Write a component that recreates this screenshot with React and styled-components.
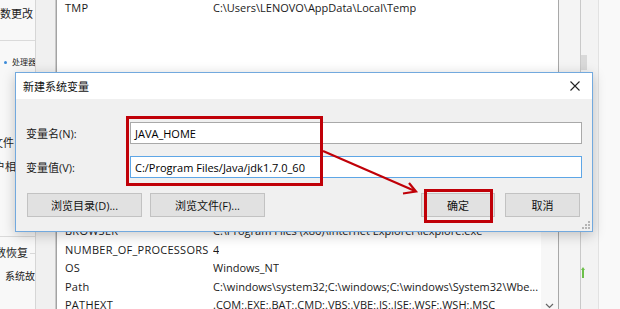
import React from "react";
import styled, { createGlobalStyle } from "styled-components";

const GlobalStyle = createGlobalStyle`
  html, body {
    margin: 0;
    padding: 0;
  }
  body {
    width: 620px;
    height: 309px;
    overflow: hidden;
    background: #f0f0f0;
    font-family: "Open Sans", "Noto Sans CJK SC", sans-serif;
    font-size: 11px;
    color: #1a1a1a;
  }
`;

const Desktop = styled.div`
  position: relative;
  display: flex;
  width: 620px;
  height: 309px;
  overflow: hidden;
`;

/* ---------- background: environment variables window ---------- */

const LeftPane = styled.div`
  width: 35px;
  flex: none;
  display: flex;
  flex-direction: column;
  background: #f8f8f8;
  border-right: 1px solid #d6d6d6;
  overflow: hidden;
  white-space: nowrap;
`;

const PaneText = styled.div`
  display: flex;
  align-items: center;
  gap: ${(p) => p.$gap || 0}px;
  height: 16px;
  line-height: 16px;
  margin-top: ${(p) => p.$top}px;
  margin-left: ${(p) => p.$indent || 0}px;
  font-size: ${(p) => p.$size || 11}px;
  color: #222;
`;

const PaneRule = styled.div`
  height: 1px;
  margin-top: ${(p) => p.$top}px;
  background: #dadada;
`;

const GroupLine = styled.span`
  flex: 1;
  height: 1px;
  background: #d8d8d8;
`;

const LinkDot = styled.span`
  width: 3px;
  height: 3px;
  flex: none;
  border-radius: 50%;
  background: #3b8ad8;
`;

const Gutter = styled.div`
  width: 19px;
  flex: none;
  background: #f0f0f0;
  border-right: 1px solid #cacaca;
`;

const ListBox = styled.div`
  width: 501px;
  flex: none;
  display: flex;
  flex-direction: column;
  background: #fff;
  border-left: 1px solid #a3a3a3;
  border-right: 1px solid #a8a8a8;
`;

const UpperList = styled.div`
  margin-top: -1px;
`;

const LowerList = styled.div`
  margin-top: auto;
  height: 87px;
  display: flex;
`;

const Rows = styled.div`
  flex: 1;
  min-width: 0;
`;

const Row = styled.div`
  display: flex;
  height: 18.5px;
  line-height: 18.5px;
  padding-left: 8px;
  white-space: nowrap;
  overflow: hidden;
`;

const NameCell = styled.span`
  width: 148px;
  flex: none;
  letter-spacing: 0.25px;
`;

const ValueCell = styled.span`
  overflow: hidden;
`;

const ScrollTrack = styled.div`
  width: 17px;
  flex: none;
  display: flex;
  flex-direction: column;
  justify-content: flex-end;
  align-items: center;
  background: #f7f7f7;
`;

const Strip = styled.div`
  width: ${(p) => p.$w}px;
  flex: none;
  display: flex;
  flex-direction: column;
  background: ${(p) => p.$bg};
  border-right: ${(p) => (p.$line ? `1px solid ${p.$line}` : "none")};
`;

const Thumb = styled.div`
  width: 6px;
  height: 15px;
  margin-top: 55px;
  background: #d9d9d9;
`;

const GreenMark = styled.div`
  margin-top: 196px;
  width: 4px;
  height: 11px;
`;

/* ---------- dialog ---------- */

const Dialog = styled.div`
  position: absolute;
  left: 15px;
  top: 72px;
  width: 576px;
  height: 158px;
  display: flex;
  flex-direction: column;
  background: #f0f0f0;
  border: 1px solid #72a9de;
  box-shadow: 0 3px 12px rgba(0, 0, 0, 0.22);
`;

const TitleBar = styled.div`
  display: flex;
  align-items: center;
  height: 26px;
  padding-left: 7px;
  background: #fff;
`;

const Title = styled.div`
  flex: 1;
  font-size: 11px;
  color: #111;
`;

const CloseButton = styled.div`
  width: 34px;
  height: 26px;
  display: flex;
  align-items: center;
  justify-content: center;
`;

const Body = styled.div`
  flex: 1;
  display: flex;
  flex-direction: column;
  padding: 23px 10px 0 10px;
`;

const FieldRow = styled.div`
  display: flex;
  align-items: center;
  height: 22px;
  margin-top: ${(p) => p.$top || 0}px;
`;

const Label = styled.div`
  width: 104px;
  flex: none;
  color: #1a1a1a;
`;

const Input = styled.div`
  flex: 1;
  height: 22px;
  box-sizing: border-box;
  display: flex;
  align-items: center;
  padding-left: 4px;
  background: #fff;
  border: 1px solid ${(p) => (p.$focused ? "#5ea6e6" : "#a9a9a9")};
  font-size: 11px;
  color: #000;
  white-space: nowrap;
`;

const ButtonRow = styled.div`
  display: flex;
  align-items: center;
  margin-top: 15px;
  padding: 0 2px 0 1px;
`;

const ButtonGroup = styled.div`
  display: flex;
  gap: ${(p) => p.$gap}px;
  margin-left: ${(p) => (p.$right ? "auto" : "0")};
`;

const Button = styled.div`
  width: ${(p) => p.$w}px;
  height: 24px;
  box-sizing: border-box;
  display: flex;
  align-items: center;
  justify-content: center;
  background: #e1e1e1;
  border: 1px solid #c2c2c2;
  font-size: 11px;
  color: #111;
`;

const Grip = styled.svg`
  position: absolute;
  right: 2px;
  bottom: 2px;
`;

/* ---------- annotations ---------- */

const Highlight = styled.div`
  position: absolute;
  left: ${(p) => p.$x}px;
  top: ${(p) => p.$y}px;
  width: ${(p) => p.$w}px;
  height: ${(p) => p.$h}px;
  box-sizing: border-box;
  border: 3px solid #c00008;
  pointer-events: none;
`;

const ArrowLayer = styled.svg`
  position: absolute;
  left: 0;
  top: 0;
  pointer-events: none;
`;

const systemVars = [
  ["BROWSER", "C:\\Program Files (x86)\\Internet Explorer\\iexplore.exe"],
  ["NUMBER_OF_PROCESSORS", "4"],
  ["OS", "Windows_NT"],
  ["Path", "C:\\windows\\system32;C:\\windows;C:\\windows\\System32\\Wbe..."],
  ["PATHEXT", ".COM;.EXE;.BAT;.CMD;.VBS;.VBE;.JS;.JSE;.WSF;.WSH;.MSC"],
];

const App = () => {
  return (
    <Desktop>
      <GlobalStyle />

      <LeftPane>
        <PaneText $top={6}>数更改</PaneText>
        <PaneRule $top={18} />
        <PaneText $top={13} $indent={4} $gap={5} $size={8}>
          <LinkDot />
          处理器
        </PaneText>
        <PaneText $top={65} $indent={-8}>文件</PaneText>
        <PaneText $top={8} $indent={-6}>户相</PaneText>
        <PaneRule $top={61} />
        <PaneText $top={8} $indent={-5} $gap={2}>
          数恢复
          <GroupLine />
        </PaneText>
        <PaneText $top={7} $indent={5} $size={10}>系统故</PaneText>
      </LeftPane>

      <Gutter />

      <ListBox>
        <UpperList>
          <Row>
            <NameCell>TMP</NameCell>
            <ValueCell>C:\Users\LENOVO\AppData\Local\Temp</ValueCell>
          </Row>
        </UpperList>
        <LowerList>
          <Rows>
            {systemVars.map(([name, value]) => (
              <Row key={name}>
                <NameCell>{name}</NameCell>
                <ValueCell>{value}</ValueCell>
              </Row>
            ))}
          </Rows>
          <ScrollTrack>
            <svg width="9" height="6" viewBox="0 0 9 6">
              <path d="M1 1 L4.5 4.5 L8 1" fill="none" stroke="#666" strokeWidth="1.2" />
            </svg>
          </ScrollTrack>
        </LowerList>
      </ListBox>

      <Strip $w={21} $bg="#f4f4f4" $line="#c9c9c9" />
      <Strip $w={17} $bg="#f3f3f3" $line="#e2e2e2">
        <Thumb />
        <GreenMark>
          <svg width="4" height="11" viewBox="0 0 4 11">
            <path d="M2 0 L4 3 L3 3 L3 11 L1 11 L1 3 L0 3 Z" fill="#6cc04a" />
          </svg>
        </GreenMark>
      </Strip>
      <Strip $w={21} $bg="#f9f9f9" />

      <Dialog>
        <TitleBar>
          <Title>新建系统变量</Title>
          <CloseButton>
            <svg width="10" height="10" viewBox="0 0 10 10">
              <path d="M0.5 0.5 L9.5 9.5 M9.5 0.5 L0.5 9.5" stroke="#222" strokeWidth="1.1" />
            </svg>
          </CloseButton>
        </TitleBar>
        <Body>
          <FieldRow>
            <Label>变量名(N):</Label>
            <Input>JAVA_HOME</Input>
          </FieldRow>
          <FieldRow $top={12}>
            <Label>变量值(V):</Label>
            <Input $focused>C:/Program Files/Java/jdk1.7.0_60</Input>
          </FieldRow>
          <ButtonRow>
            <ButtonGroup $gap={8}>
              <Button $w={115}>浏览目录(D)...</Button>
              <Button $w={115}>浏览文件(F)...</Button>
            </ButtonGroup>
            <ButtonGroup $gap={10} $right>
              <Button $w={74}>确定</Button>
              <Button $w={75}>取消</Button>
            </ButtonGroup>
          </ButtonRow>
        </Body>
        <Grip width="8" height="8" viewBox="0 0 8 8">
          {[
            [6, 0],
            [6, 3],
            [3, 3],
            [6, 6],
            [3, 6],
            [0, 6],
          ].map(([x, y]) => (
            <rect key={`${x}-${y}`} x={x} y={y} width="2" height="2" fill="#b5b5b5" />
          ))}
        </Grip>
      </Dialog>

      <Highlight $x={126} $y={116} $w={197} $h={70} />
      <Highlight $x={424} $y={189} $w={69} $h={34} />
      <ArrowLayer width="620" height="309" viewBox="0 0 620 309">
        <path d="M323 151 L415 191" stroke="#c00008" strokeWidth="2.2" fill="none" />
        <path d="M409 183 L416 191.5 L403 193.5" stroke="#c00008" strokeWidth="2.2" fill="none" />
      </ArrowLayer>
    </Desktop>
  );
};

export default App;
